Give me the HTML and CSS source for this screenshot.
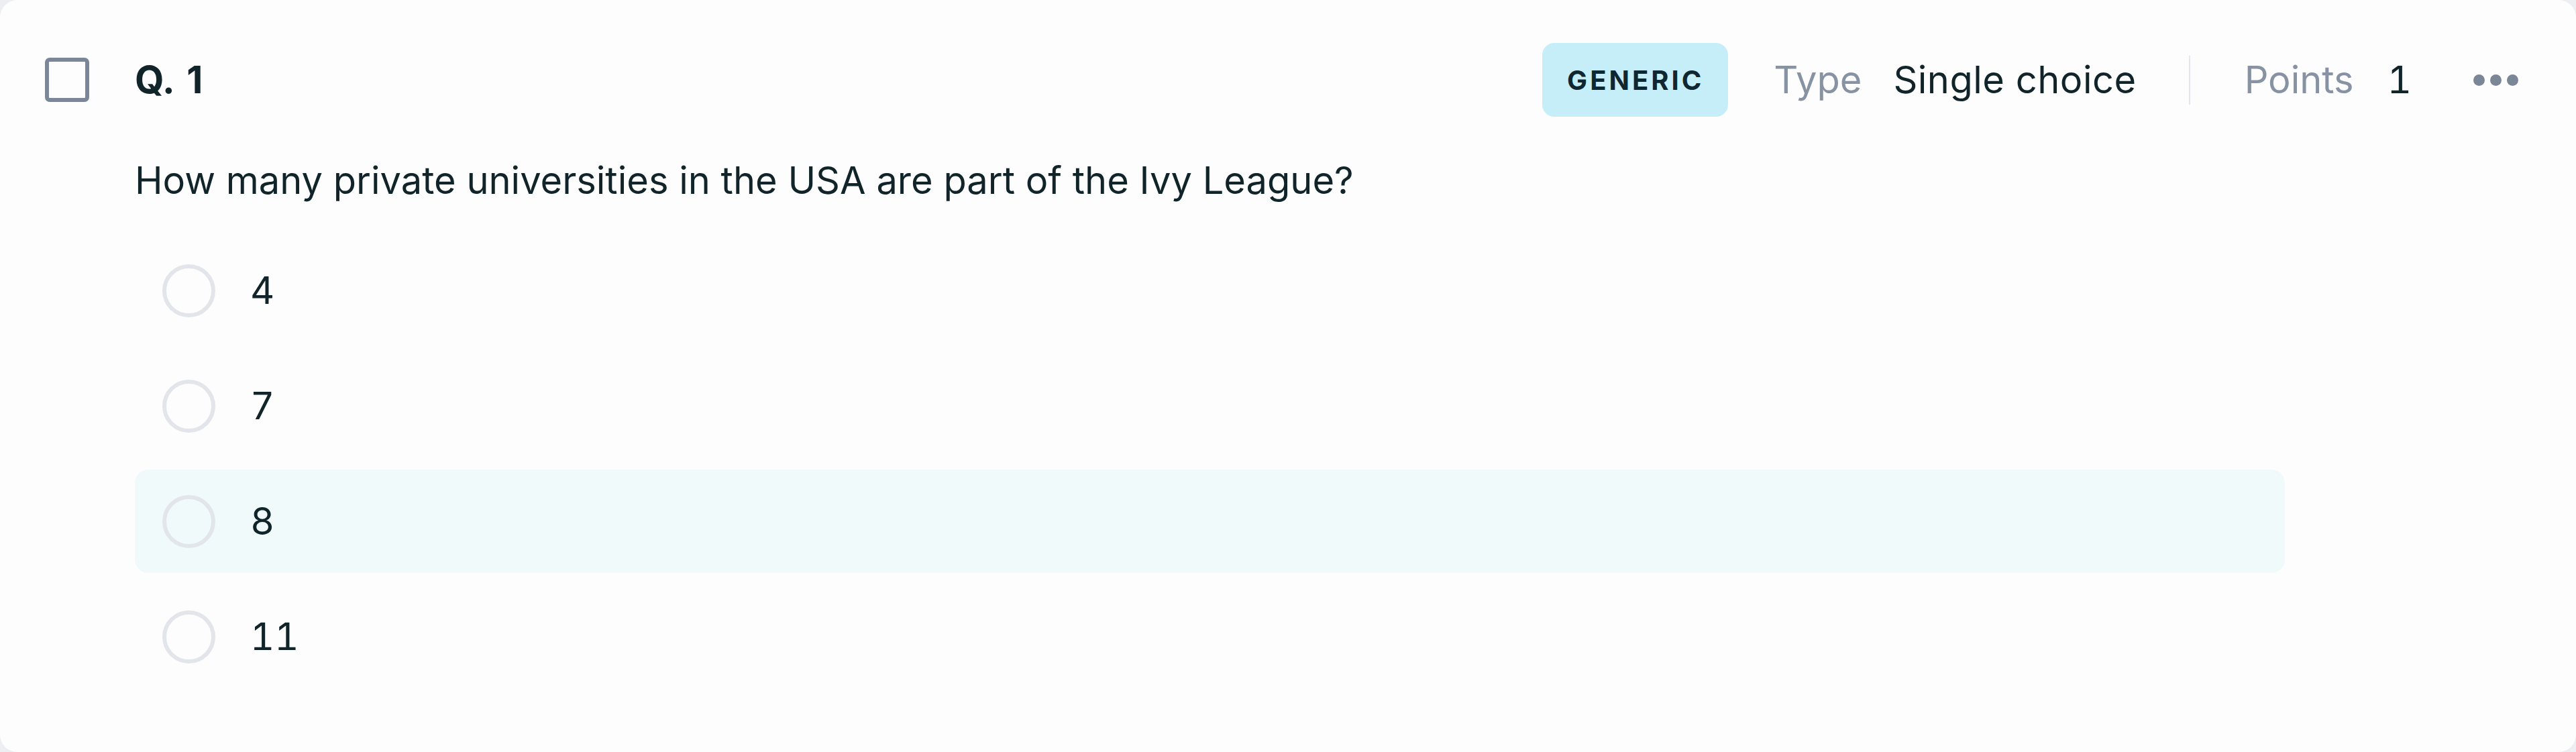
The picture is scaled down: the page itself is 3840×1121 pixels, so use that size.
FILE: index.html
```html
<!DOCTYPE html>
<html lang="en">
<head>
<meta charset="utf-8">
<title>Question card</title>
<link rel="stylesheet" href="styles.css">
</head>
<body>
<div class="card">
  <div class="header">
    <span class="checkbox"></span>
    <span class="title">Q. 1</span>
    <div class="meta">
      <span class="badge">GENERIC</span>
      <span class="label type-label">Type</span>
      <span class="value type-value">Single choice</span>
      <span class="divider"></span>
      <span class="label points-label">Points</span>
      <span class="value num">1</span>
      <span class="more"><i></i><i></i><i></i></span>
    </div>
  </div>
  <p class="question">How many private universities in the USA are part of the Ivy League?</p>
  <ul class="options">
    <li class="option"><span class="radio"></span><span class="opt-text">4</span></li>
    <li class="option"><span class="radio"></span><span class="opt-text">7</span></li>
    <li class="option option-hover"><span class="radio"></span><span class="opt-text">8</span></li>
    <li class="option"><span class="radio"></span><span class="opt-text">11</span></li>
  </ul>
</div>
</body>
</html>
```
FILE: styles.css
```css
html, body {
  margin: 0;
  padding: 0;
  background: #eceef2;
}
body {
  font-family: Inter, "Noto Sans", "Liberation Sans", sans-serif;
  color: #10242a;
}
.card {
  box-sizing: border-box;
  height: 1121px;
  background: #fdfdfd;
  border-radius: 26px;
  padding: 64px 86px 0 67px;
}
.header {
  display: flex;
  align-items: center;
  height: 110px;
}
.checkbox {
  box-sizing: border-box;
  width: 66px;
  height: 66px;
  border: 6px solid #7b8799;
  border-radius: 7px;
  margin-right: 68px;
  flex: none;
}
.title {
  font-size: 56px;
  font-weight: 700;
  word-spacing: 6px;
}
.meta {
  margin-left: auto;
  display: flex;
  align-items: center;
  font-size: 56px;
}
.badge {
  display: flex;
  align-items: center;
  height: 110px;
  padding: 0 36px 0 37px;
  background: #c6eef9;
  border-radius: 18px;
  font-size: 40px;
  font-weight: 700;
  letter-spacing: 4px;
  color: #0f2730;
  margin-right: 68px;
}
.label {
  color: #8792a2;
}
.type-label {
  margin-right: 47px;
}
.type-value {
  letter-spacing: 0.5px;
}
.points-label {
  margin-right: 50px;
}
.num {
  font-variant-numeric: tabular-nums;
}
.divider {
  width: 2px;
  height: 73px;
  background: #e3e6eb;
  margin: 0 81px 0 78px;
}
.more {
  display: flex;
  gap: 8px;
  margin-left: 92px;
}
.more i {
  width: 17px;
  height: 17px;
  border-radius: 50%;
  background: #7b8696;
}
.question {
  margin: 55px 0 0 134px;
  font-size: 56px;
  line-height: 80px;
}
.options {
  list-style: none;
  margin: 47px 0 0 134px;
  padding: 0;
  width: 3205px;
  display: flex;
  flex-direction: column;
  gap: 18px;
}
.option {
  display: flex;
  align-items: center;
  height: 154px;
  padding-left: 41px;
  border-radius: 20px;
}
.option-hover {
  background: #f0fafa;
}
.radio {
  box-sizing: border-box;
  width: 79px;
  height: 79px;
  border: 6px solid #e2e5ea;
  border-radius: 50%;
  margin-right: 52px;
  flex: none;
}
.opt-text {
  font-size: 56px;
  font-variant-numeric: tabular-nums;
}
```
